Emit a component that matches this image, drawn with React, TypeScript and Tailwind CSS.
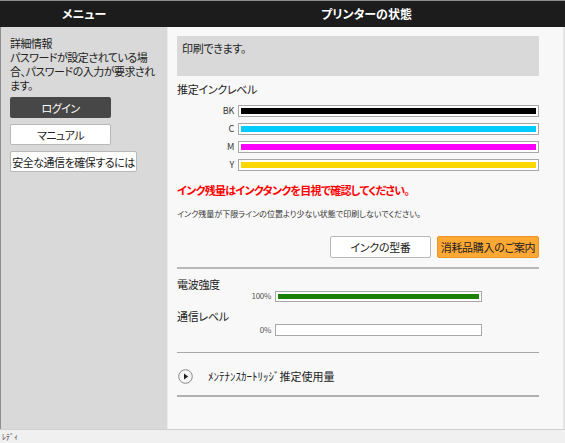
import React from 'react';

const font = {
  fontFamily: '"Noto Sans CJK JP", "Noto Sans", sans-serif',
  fontFeatureSettings: '"palt"',
};

interface InkBar {
  label: string;
  color: string;
}

const inks: InkBar[] = [
  { label: 'BK', color: 'bg-[#000000]' },
  { label: 'C', color: 'bg-[#00ccff]' },
  { label: 'M', color: 'bg-[#ff00ff]' },
  { label: 'Y', color: 'bg-[#ffd700]' },
];

const PlayIcon = () => (
  <svg width="15" height="15" viewBox="0 0 15 15">
    <circle cx="7.5" cy="7.5" r="6.8" fill="#f5f5f5" stroke="#8a8a8a" strokeWidth="1" />
    <path d="M6 4.5 L10.2 7.5 L6 10.5 Z" fill="#222" />
  </svg>
);

export default function App() {
  return (
    <div
      className="flex h-[443px] w-[565px] flex-col overflow-hidden bg-[#f0f0f0] text-[#222]"
      style={font}
    >
      {/* header */}
      <div className="flex h-[27px] shrink-0 border-t border-[#8c8c8c] bg-[#1c1c1c] text-[12px] font-bold text-white">
        <div className="flex w-[168px] items-center justify-center">メニュー</div>
        <div className="flex flex-1 items-center justify-center">プリンターの状態</div>
      </div>

      <div className="flex min-h-0 flex-1">
        {/* sidebar */}
        <aside className="flex w-[168px] shrink-0 flex-col whitespace-nowrap border-l border-[#8c8c8c] border-r border-r-[#ececec] bg-[#d9d9d9] px-[9px] pt-[9px] text-[11px] leading-[14px] tracking-[-0.5px]">
          <div className="h-[14px]">詳細情報</div>
          <div className="h-[14px]">パスワードが設定されている場</div>
          <div className="h-[14px]">合、パスワードの入力が要求され</div>
          <div className="h-[14px]">ます。</div>
          <button className="mt-[5px] h-[21px] w-[101px] rounded-[2px] bg-[#474747] text-[11px] text-white">
            ログイン
          </button>
          <button className="mt-[6px] h-[21px] w-[101px] rounded-[2px] border border-[#b8b8b8] bg-white text-[11px]">
            マニュアル
          </button>
          <button className="mt-[6px] h-[21px] w-[127px] rounded-[2px] border border-[#b8b8b8] bg-white px-0 text-[11px]">
            安全な通信を確保するには
          </button>
        </aside>

        {/* main */}
        <main className="flex flex-1 flex-col bg-[#f8f8f8] pl-[9px] pr-[24px] pt-[9px] tracking-[-0.3px]">
          <div className="h-[40px] bg-[#d9d9d9] px-[5px] pt-[4px] text-[11px]">印刷できます。</div>

          <div className="mt-[5px] text-[11px]">推定インクレベル</div>

          <div className="mt-[7px] flex flex-col gap-[6px]">
            {inks.map((ink) => (
              <div key={ink.label} className="flex items-center">
                <span className="w-[61px] pr-[4px] text-right text-[9px] leading-[12px] text-[#333]">
                  {ink.label}
                </span>
                <div className="flex h-[12px] flex-1 border border-[#a8a8a8] bg-white p-[2px]">
                  <div className={`h-full w-full ${ink.color}`} />
                </div>
              </div>
            ))}
          </div>

          <div className="mt-[11px] text-[11px] font-bold tracking-[-0.7px] text-[#ff0000]">
            インク残量はインクタンクを目視で確認してください。
          </div>
          <div className="mt-[10px] text-[8px] tracking-normal text-[#333]">
            インク残量が下限ラインの位置より少ない状態で印刷しないでください。
          </div>

          <div className="mt-[16px] flex justify-end gap-[6px]">
            <button className="h-[22px] w-[101px] rounded-[2px] border border-[#b8b8b8] bg-white text-[11px]">
              インクの型番
            </button>
            <button className="h-[22px] w-[102px] rounded-[2px] border border-[#e8982a] bg-[#ffa834] text-[11px]">
              消耗品購入のご案内
            </button>
          </div>

          <div className="mt-[9px] h-[2px] bg-[#b8b8b8]" />

          <div className="mt-[7px] text-[11px] leading-[16px]">電波強度</div>
          <div className="-mt-[2px] flex items-center">
            <span className="w-[98px] pr-[4px] text-right text-[8px] text-[#555]">100%</span>
            <div className="h-[11px] w-[207px] border border-[#a8a8a8] bg-white p-[2px]">
              <div className="h-full w-full bg-[#1a8200]" />
            </div>
          </div>
          <div className="mt-[6px] text-[11px] leading-[16px]">通信レベル</div>
          <div className="flex items-center">
            <span className="w-[98px] pr-[4px] text-right text-[8px] text-[#555]">0%</span>
            <div className="h-[12px] w-[207px] border border-[#a8a8a8] bg-white" />
          </div>

          <div className="mt-[16px] h-px bg-[#a8a8a8]" />

          <div className="mt-[15px] flex items-center gap-[15px] pl-[1px]">
            <PlayIcon />
            <span className="text-[11px] tracking-normal">ﾒﾝﾃﾅﾝｽｶｰﾄﾘｯｼﾞ推定使用量</span>
          </div>

          <div className="mt-[10px] h-[2px] bg-[#b0b0b0]" />
        </main>
        <div className="w-[2px] bg-[#e6e6e6]" />
      </div>

      {/* status bar */}
      <div className="flex h-[14px] shrink-0 items-center border-t border-[#d0d0d0] bg-[#f0f0f0] pl-[2px] text-[8px] text-[#333]">
        ﾚﾃﾞｨ
      </div>
    </div>
  );
}
